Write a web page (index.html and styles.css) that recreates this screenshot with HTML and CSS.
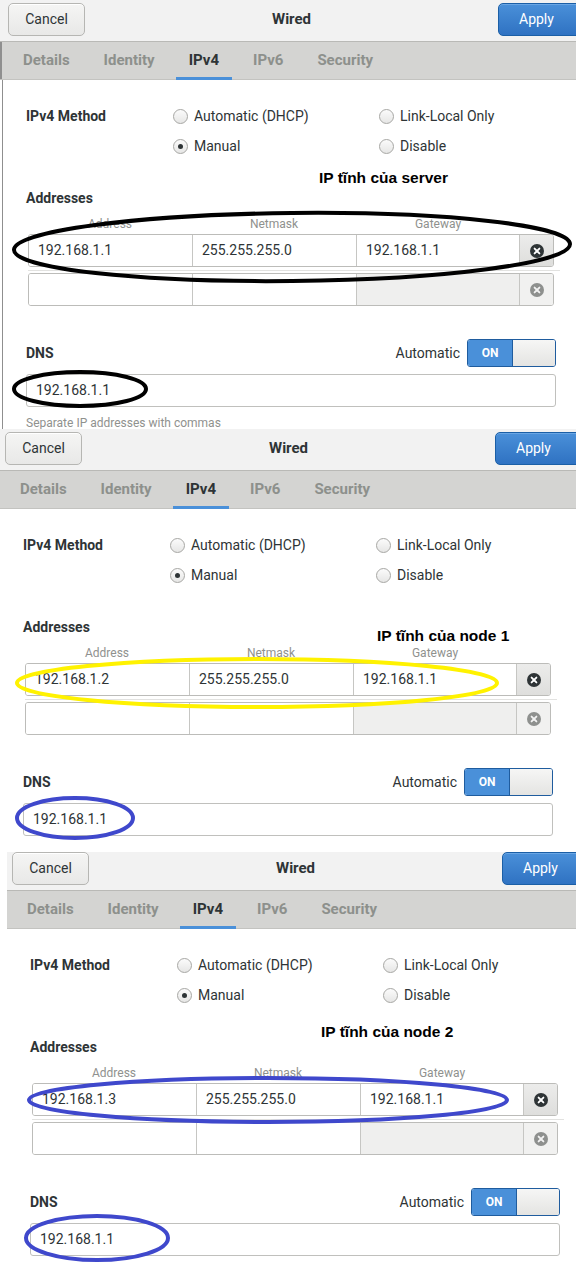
FILE: index.html
```html
<!DOCTYPE html>
<html lang="vi">
<head>
<meta charset="utf-8">
<title>Wired IPv4</title>
<link rel="stylesheet" href="styles.css">
</head>
<body>

<section class="panel p1">
  <div class="win">
    <header class="hb">
      <button class="btn cancel">Cancel</button>
      <div class="title">Wired</div>
      <button class="btn apply">Apply</button>
    </header>
    <nav class="tabs">
      <span class="tab">Details</span>
      <span class="tab">Identity</span>
      <span class="tab active">IPv4</span>
      <span class="tab">IPv6</span>
      <span class="tab">Security</span>
    </nav>
    <div class="body">
      <div class="method">
        <div class="mlabel">IPv4 Method</div>
        <label class="radio"><span class="dot"></span>Automatic (DHCP)</label>
        <label class="radio"><span class="dot"></span>Link-Local Only</label>
        <label class="radio r2"><span class="dot on"></span>Manual</label>
        <label class="radio"><span class="dot"></span>Disable</label>
      </div>
      <div class="section">Addresses</div>
      <div class="colheads"><span>Address</span><span>Netmask</span><span>Gateway</span><span></span></div>
      <div class="row">
        <div class="cell">192.168.1.1</div>
        <div class="cell">255.255.255.0</div>
        <div class="cell">192.168.1.1</div>
        <div class="del"><svg width="14" height="14" viewBox="0 0 14 14"><circle cx="7" cy="7" r="7" fill="#2e3436"/><path d="M4.6 4.6 9.4 9.4M9.4 4.6 4.6 9.4" stroke="#fff" stroke-width="1.9" stroke-linecap="round"/></svg></div>
      </div>
      <div class="sep"></div>
      <div class="row empty">
        <div class="cell"></div>
        <div class="cell"></div>
        <div class="cell off"></div>
        <div class="del"><svg width="14" height="14" viewBox="0 0 14 14"><circle cx="7" cy="7" r="7" fill="#8e908e"/><path d="M4.6 4.6 9.4 9.4M9.4 4.6 4.6 9.4" stroke="#f2f2f2" stroke-width="1.9" stroke-linecap="round"/></svg></div>
      </div>
      <div class="dnshead">
        <div class="section">DNS</div>
        <div class="auto">Automatic<span class="switch"><span class="swon">ON</span><span class="knob"></span></span></div>
      </div>
      <div class="entry">192.168.1.1</div>
      <div class="hint">Separate IP addresses with commas</div>
    </div>
  </div>
  <svg class="annot" width="576" height="429" viewBox="0 0 576 429">
    <ellipse cx="292" cy="247" rx="278" ry="34" transform="rotate(-0.6 292 247)" fill="none" stroke="#000" stroke-width="4"/>
    <ellipse cx="80" cy="389" rx="66" ry="17" fill="none" stroke="#000" stroke-width="4"/>
  </svg>
  <div class="note n1">IP tĩnh của server</div>
</section>

<section class="panel p2">
  <div class="win">
    <header class="hb">
      <button class="btn cancel">Cancel</button>
      <div class="title">Wired</div>
      <button class="btn apply">Apply</button>
    </header>
    <nav class="tabs">
      <span class="tab">Details</span>
      <span class="tab">Identity</span>
      <span class="tab active">IPv4</span>
      <span class="tab">IPv6</span>
      <span class="tab">Security</span>
    </nav>
    <div class="body">
      <div class="method">
        <div class="mlabel">IPv4 Method</div>
        <label class="radio"><span class="dot"></span>Automatic (DHCP)</label>
        <label class="radio"><span class="dot"></span>Link-Local Only</label>
        <label class="radio r2"><span class="dot on"></span>Manual</label>
        <label class="radio"><span class="dot"></span>Disable</label>
      </div>
      <div class="section">Addresses</div>
      <div class="colheads"><span>Address</span><span>Netmask</span><span>Gateway</span><span></span></div>
      <div class="row">
        <div class="cell">192.168.1.2</div>
        <div class="cell">255.255.255.0</div>
        <div class="cell">192.168.1.1</div>
        <div class="del"><svg width="14" height="14" viewBox="0 0 14 14"><circle cx="7" cy="7" r="7" fill="#2e3436"/><path d="M4.6 4.6 9.4 9.4M9.4 4.6 4.6 9.4" stroke="#fff" stroke-width="1.9" stroke-linecap="round"/></svg></div>
      </div>
      <div class="sep"></div>
      <div class="row empty">
        <div class="cell"></div>
        <div class="cell"></div>
        <div class="cell off"></div>
        <div class="del"><svg width="14" height="14" viewBox="0 0 14 14"><circle cx="7" cy="7" r="7" fill="#8e908e"/><path d="M4.6 4.6 9.4 9.4M9.4 4.6 4.6 9.4" stroke="#f2f2f2" stroke-width="1.9" stroke-linecap="round"/></svg></div>
      </div>
      <div class="dnshead">
        <div class="section">DNS</div>
        <div class="auto">Automatic<span class="switch"><span class="swon">ON</span><span class="knob"></span></span></div>
      </div>
      <div class="entry">192.168.1.1</div>
    </div>
  </div>
  <svg class="annot" width="576" height="420" viewBox="0 0 576 420">
    <ellipse cx="257" cy="254" rx="240" ry="24" fill="none" stroke="#fff200" stroke-width="4"/>
    <ellipse cx="75" cy="389" rx="58" ry="20" fill="none" stroke="#3f48cc" stroke-width="4"/>
  </svg>
  <div class="note n2">IP tĩnh của node 1</div>
</section>

<section class="panel p3">
  <div class="win">
    <header class="hb">
      <button class="btn cancel">Cancel</button>
      <div class="title">Wired</div>
      <button class="btn apply">Apply</button>
    </header>
    <nav class="tabs">
      <span class="tab">Details</span>
      <span class="tab">Identity</span>
      <span class="tab active">IPv4</span>
      <span class="tab">IPv6</span>
      <span class="tab">Security</span>
    </nav>
    <div class="body">
      <div class="method">
        <div class="mlabel">IPv4 Method</div>
        <label class="radio"><span class="dot"></span>Automatic (DHCP)</label>
        <label class="radio"><span class="dot"></span>Link-Local Only</label>
        <label class="radio r2"><span class="dot on"></span>Manual</label>
        <label class="radio"><span class="dot"></span>Disable</label>
      </div>
      <div class="section">Addresses</div>
      <div class="colheads"><span>Address</span><span>Netmask</span><span>Gateway</span><span></span></div>
      <div class="row">
        <div class="cell">192.168.1.3</div>
        <div class="cell">255.255.255.0</div>
        <div class="cell">192.168.1.1</div>
        <div class="del"><svg width="14" height="14" viewBox="0 0 14 14"><circle cx="7" cy="7" r="7" fill="#2e3436"/><path d="M4.6 4.6 9.4 9.4M9.4 4.6 4.6 9.4" stroke="#fff" stroke-width="1.9" stroke-linecap="round"/></svg></div>
      </div>
      <div class="sep"></div>
      <div class="row empty">
        <div class="cell"></div>
        <div class="cell"></div>
        <div class="cell off"></div>
        <div class="del"><svg width="14" height="14" viewBox="0 0 14 14"><circle cx="7" cy="7" r="7" fill="#8e908e"/><path d="M4.6 4.6 9.4 9.4M9.4 4.6 4.6 9.4" stroke="#f2f2f2" stroke-width="1.9" stroke-linecap="round"/></svg></div>
      </div>
      <div class="dnshead">
        <div class="section">DNS</div>
        <div class="auto">Automatic<span class="switch"><span class="swon">ON</span><span class="knob"></span></span></div>
      </div>
      <div class="entry">192.168.1.1</div>
    </div>
  </div>
  <svg class="annot" width="576" height="414" viewBox="0 0 576 414">
    <ellipse cx="268" cy="251" rx="239" ry="22" fill="none" stroke="#3f48cc" stroke-width="4"/>
    <ellipse cx="97" cy="389" rx="71" ry="22" fill="none" stroke="#3f48cc" stroke-width="4"/>
  </svg>
  <div class="note n3">IP tĩnh của node 2</div>
</section>

</body>
</html>
```

FILE: styles.css
```css
html, body {
  margin: 0;
  padding: 0;
}
body {
  width: 576px;
  overflow: hidden;
  background: #fff;
  font-family: Roboto, "Noto Sans", sans-serif;
  font-size: 14px;
  color: #2e3436;
}

.panel {
  position: relative;
  overflow: hidden;
  --dx: 0px;
  --wx: 0px;
}
.p1 { height: 429px; }
.p2 { height: 420px; --dx: -3px; --wx: -3px; }
.p3 { height: 414px; --dx: 4px; --wx: 7px; }

.win {
  margin-left: var(--wx);
  width: 640px;
}

/* header bar */
.hb {
  box-sizing: border-box;
  height: 42px;
  background: #f2f2f2;
  border-bottom: 1px solid #b9b9b6;
  display: flex;
  align-items: flex-start;
  padding-top: 3px;
  padding-left: calc(8px + var(--dx) - var(--wx));
}
.p3 .hb {
  padding-top: 0;
  border-top: 3px solid #fff;
}
.btn {
  box-sizing: border-box;
  height: 33px;
  margin: 0;
  border: 1px solid #b6b6b3;
  border-radius: 5px;
  background: linear-gradient(#f5f5f4, #e8e8e7);
  font-family: Roboto, "Noto Sans", sans-serif;
  font-size: 14px;
  line-height: 31px;
  color: #2e3436;
  box-shadow: inset 0 1px 0 #fff;
}
.cancel {
  width: 77px;
  padding: 0;
}
.title {
  width: 413px;
  text-align: center;
  font-weight: 700;
  font-size: 15px;
  line-height: 33px;
}
.apply {
  padding: 0 30px 0 20px;
  border-color: #1b5fa6;
  background: linear-gradient(#4a90d9, #2f72c2);
  color: #fff;
  box-shadow: inset 0 1px 0 #6aa6e4;
}

/* tabs */
.tabs {
  box-sizing: border-box;
  height: 38px;
  background: #d4d4d2;
  border-bottom: 1px solid #c3c3c0;
  display: flex;
  gap: 8px;
  padding-left: calc(10px + var(--dx) - var(--wx));
}
.p1 .tabs { box-shadow: inset 2px 0 0 #8f8f8f; }
.tab {
  box-sizing: border-box;
  height: 38px;
  padding: 0 13px;
  line-height: 37px;
  font-size: 15px;
  font-weight: 700;
  color: #8d908c;
  border-bottom: 3px solid transparent;
}
.tab.active {
  color: #2e3436;
  border-bottom-color: #4a90d9;
  line-height: 35px;
  padding-top: 1px;
}

/* body */
.body {
  padding: 21px 0 0 calc(26px + var(--dx) - var(--wx));
  width: 530px;
}
.p1 .body {
  height: 400px;
  box-shadow: inset 2px 0 0 #fff, inset 3px 0 0 #8f8f8f;
}

.method {
  display: grid;
  grid-template-columns: 147px 206px 140px;
  grid-auto-rows: 30px;
  align-items: center;
}
.mlabel {
  font-weight: 700;
  font-size: 14px;
}
.radio {
  display: flex;
  align-items: center;
  gap: 6px;
  font-size: 14px;
}
.r2 { grid-column: 2; }
.dot {
  box-sizing: border-box;
  width: 15px;
  height: 15px;
  border-radius: 50%;
  border: 1px solid #a7a7a4;
  background: linear-gradient(#fbfbfb, #e6e6e5);
  display: flex;
  align-items: center;
  justify-content: center;
}
.dot.on::after {
  content: "";
  width: 5px;
  height: 5px;
  border-radius: 50%;
  background: #2e3436;
}

.section {
  font-weight: 700;
  font-size: 14px;
  line-height: 20px;
}
.method + .section {
  margin-top: 27px;
}

.colheads {
  margin-top: 8px;
  margin-left: 2px;
  display: grid;
  grid-template-columns: 164px 164px 164px 34px;
  font-size: 12px;
  line-height: 16px;
  color: #8f918e;
  text-align: center;
}

.row {
  box-sizing: border-box;
  margin-top: 2px;
  margin-left: 2px;
  width: 526px;
  height: 33px;
  display: grid;
  grid-template-columns: 164px 164px 163px 33px;
  border: 1px solid #bcbcb9;
  border-radius: 3px;
  overflow: hidden;
}
.cell {
  border-right: 1px solid #c6c6c3;
  padding-left: 9px;
  line-height: 31px;
  font-size: 14px;
  background: #fff;
}
.cell.off {
  background: #efefee;
}
.del {
  display: flex;
  align-items: center;
  justify-content: center;
  background: linear-gradient(#ececeb, #dededc);
}
.empty .del {
  background: #f1f1f0;
}
.sep {
  margin: 3px 0 2px 2px;
  width: 532px;
  height: 1px;
  background: #e2e2e0;
}

.dnshead {
  margin-top: 33px;
  height: 28px;
  display: flex;
  justify-content: space-between;
  align-items: center;
}
.auto {
  display: flex;
  align-items: center;
  gap: 7px;
  font-size: 14px;
}
.switch {
  box-sizing: border-box;
  width: 89px;
  height: 28px;
  display: flex;
  border: 1px solid #1f5c9e;
  border-radius: 3px;
  overflow: hidden;
}
.swon {
  width: 44px;
  background: #4a90d9;
  color: #fff;
  font-weight: 700;
  font-size: 12px;
  line-height: 26px;
  text-align: center;
}
.knob {
  flex: 1;
  border-left: 1px solid #1f5c9e;
  background: linear-gradient(#f6f6f5, #e4e4e2);
}

.entry {
  box-sizing: border-box;
  margin-top: 7px;
  width: 530px;
  height: 33px;
  border: 1px solid #c0c0bd;
  border-radius: 3px;
  padding-left: 9px;
  line-height: 31px;
  font-size: 14px;
}
.hint {
  margin-top: 8px;
  font-size: 12px;
  line-height: 16px;
  color: #8f918e;
}

/* annotations */
.annot {
  position: absolute;
  left: 0;
  top: 0;
  pointer-events: none;
}
.note {
  position: absolute;
  font-family: "Liberation Sans", Arial, sans-serif;
  font-weight: 700;
  font-size: 15.5px;
  line-height: 18px;
  color: #000;
  white-space: nowrap;
}
.n1 { left: 319px; top: 169px; }
.n2 { left: 377px; top: 198px; }
.n3 { left: 321px; top: 174px; }
```
